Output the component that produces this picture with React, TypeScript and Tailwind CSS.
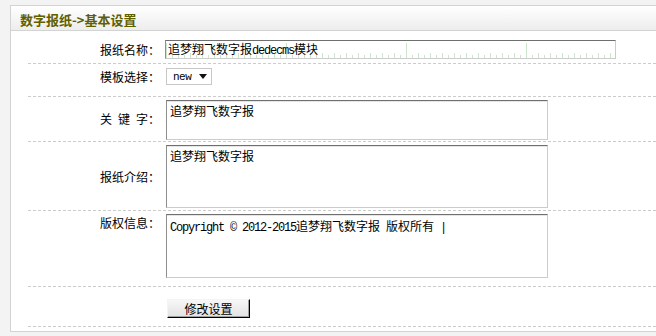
import React from 'react';

const cjk = "font-['Noto_Sans_CJK_SC','Noto_Sans',sans-serif]";
const mono = "font-['Liberation_Mono','DejaVu_Sans_Mono',monospace] tracking-[-1.2px]";

const Latin: React.FC<{ children: React.ReactNode }> = ({ children }) => (
    <span className={mono + ' whitespace-pre'}>{children}</span>
);

const Ruler: React.FC = () => {
    const ticks = [];
    for (let i = 0; i < 76; i++) {
        const x = i * 6 + 0.5;
        let h = 3;
        if (i % 20 === 0) h = 15;
        else if (i % 2 === 0) h = 5;
        ticks.push(<line key={i} x1={x} x2={x} y1={17 - h} y2={17} stroke="#cde4cd" strokeWidth="1" />);
    }
    return (
        <svg className="absolute inset-0" width="449" height="17" viewBox="0 0 449 17">
            {ticks}
        </svg>
    );
};

const boxBorder = 'border border-t-[#6f6f6f] border-l-[#8e8e8e] border-r-[#cccccc] border-b-[#cccccc] bg-white';

const Label: React.FC<{ children: React.ReactNode; className?: string }> = ({ children, className = '' }) => (
    <div className={'w-[138px] pr-[6px] text-right text-[12px] leading-[16px] text-black shrink-0 ' + className}>{children}</div>
);

const App: React.FC = () => {
    return (
        <div className={'w-[656px] h-[336px] bg-[#f3f3f3] pl-[10px] pt-[5px] overflow-hidden ' + cjk}>
            <div className="h-[327px] border-l border-t border-b border-[#d3d3d3] bg-white flex flex-col">
                {/* title bar */}
                <div className="h-[25px] border-b border-[#d3d3d3] bg-gradient-to-b from-white to-[#ededed] pl-[9px]">
                    <span className="text-[13px] leading-[24px] font-bold text-[#5f5f00]">数字报纸-&gt;基本设置</span>
                </div>

                <div className="ml-[17px]">
                    {/* 报纸名称 */}
                    <div className="flex items-center pt-[9px] pb-[4px] border-b border-dashed border-[#cccccc]">
                        <Label>报纸名称：</Label>
                        <div className={'relative -ml-px w-[451px] h-[19px] ' + boxBorder}>
                            <Ruler />
                            <div className="relative pl-[2px] text-[12px] leading-[15px] text-black whitespace-nowrap">
                                追梦翔飞数字报<Latin>dedecms</Latin>模块
                            </div>
                        </div>
                    </div>

                    {/* 模板选择 */}
                    <div className="flex items-start pt-[4px] pb-[11px] border-b border-dashed border-[#cccccc]">
                        <Label className="pt-[1px]">模板选择：</Label>
                        <div className="w-[46px] h-[17px] border border-[#c8c8c8] bg-white flex items-center justify-between pl-[6px] pr-[4px]">
                            <span className="font-['Liberation_Mono',monospace] text-[11px] leading-[14px] text-black tracking-[-0.5px]">new</span>
                            <svg width="8" height="5" viewBox="0 0 8 5">
                                <path d="M0 0 H8 L4 5 Z" fill="#111" />
                            </svg>
                        </div>
                    </div>

                    {/* 关键字 */}
                    <div className="flex items-center pt-[3px] pb-[1px] border-b border-dashed border-[#cccccc]">
                        <Label>关<Latin> </Latin>键<Latin> </Latin>字：</Label>
                        <div className={'w-[382px] h-[40px] pl-[3px] pt-[2px] shadow-[inset_0_1px_0_#e6e6e6] ' + boxBorder}>
                            <div className="text-[12px] leading-[16px] text-black">追梦翔飞数字报</div>
                        </div>
                    </div>

                    {/* 报纸介绍 */}
                    <div className="flex items-center pt-[3px] pb-[2px] border-b border-dashed border-[#cccccc]">
                        <Label>报纸介绍：</Label>
                        <div className={'w-[382px] h-[63px] pl-[3px] pt-[2px] shadow-[inset_0_1px_0_#e6e6e6] ' + boxBorder}>
                            <div className="text-[12px] leading-[16px] text-black">追梦翔飞数字报</div>
                        </div>
                    </div>

                    {/* 版权信息 */}
                    <div className="flex items-start pt-[3px] pb-[8px] border-b border-dashed border-[#cccccc]">
                        <Label className="pt-[1px]">版权信息：</Label>
                        <div className={'w-[382px] h-[64px] pl-[3px] pt-[3px] shadow-[inset_0_1px_0_#e6e6e6] ' + boxBorder}>
                            <div className="text-[12px] leading-[16px] text-black whitespace-nowrap">
                                <Latin>Copyright © 2012-2015</Latin>追梦翔飞数字报<Latin> </Latin>版权所有<Latin> |</Latin>
                            </div>
                        </div>
                    </div>

                    {/* 提交 */}
                    <div className="flex items-start pt-[12px] pb-[8px] border-b border-dashed border-[#cccccc]">
                        <Label> </Label>
                        <button className="ml-px w-[83px] h-[19px] border border-t-[#f4f4f4] border-l-[#f4f4f4] border-r-black border-b-black bg-gradient-to-b from-[#f7f7f7] to-[#e2e2e2] shadow-[inset_-1px_-1px_0_#a0a0a0] text-[12px] leading-[15px] text-black">
                            修改设置
                        </button>
                    </div>
                </div>
            </div>
        </div>
    );
};

export default App;
